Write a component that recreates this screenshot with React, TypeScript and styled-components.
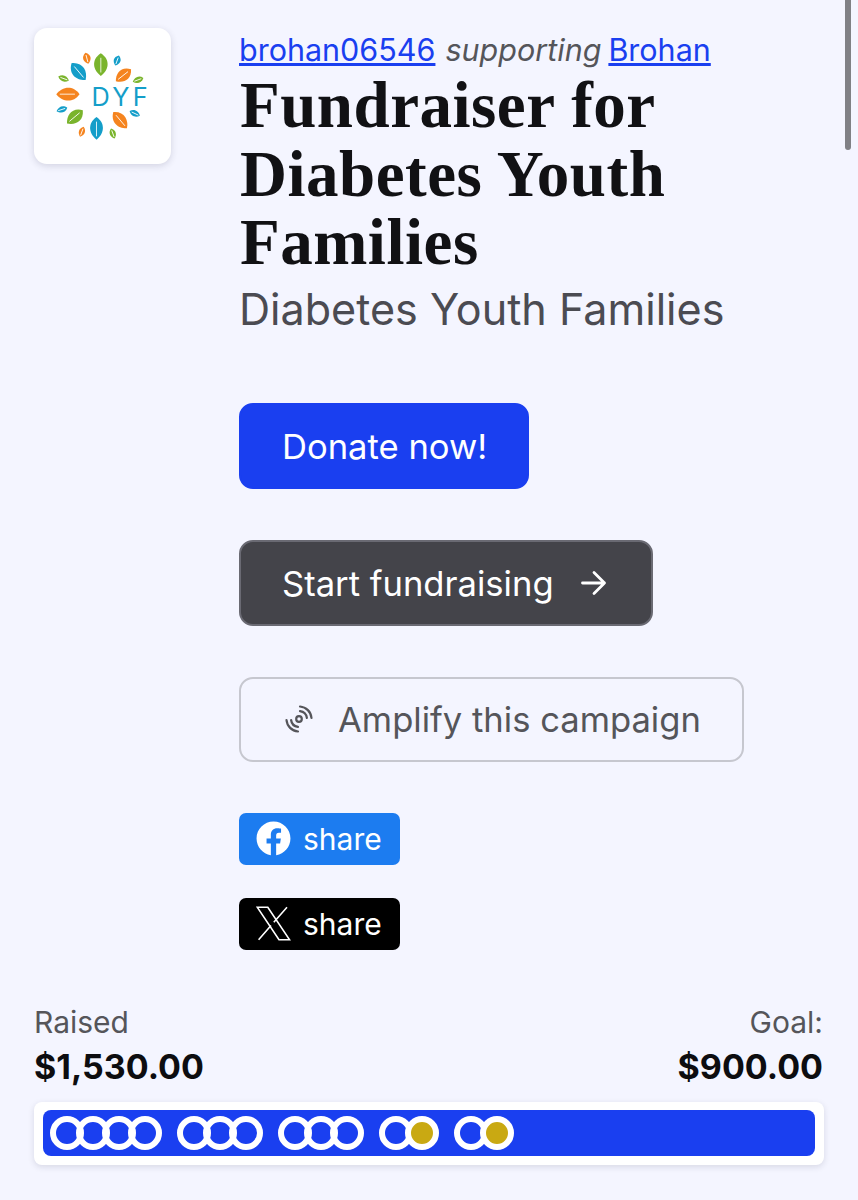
import React from "react";
import styled, {createGlobalStyle} from "styled-components";
import {FaFacebook} from "react-icons/fa";

const GlobalStyle = createGlobalStyle`
  html, body {
    margin: 0;
    padding: 0;
    background: #f4f5ff;
    overflow: hidden;
  }
  body {
    font-family: Inter, "Liberation Sans", sans-serif;
  }
`

const Page = styled.div`
  position: relative;
  width: 858px;
  height: 1200px;
  box-sizing: border-box;
  padding: 28px 34px 0 34px;
  overflow: hidden;
`

const ScrollThumb = styled.div`
  position: absolute;
  top: 0;
  right: 7px;
  width: 6px;
  height: 150px;
  border-radius: 0 0 3px 3px;
  background: #808085;
`

const Top = styled.div`
  display: flex;
  flex-direction: row;
`

const LogoCard = styled.div`
  flex: none;
  width: 137px;
  height: 136px;
  border-radius: 13px;
  background: #ffffff;
  box-shadow: 0 2px 7px rgba(40, 40, 70, 0.16);
`

const Main = styled.div`
  margin-left: 68px;
  display: flex;
  flex-direction: column;
  align-items: flex-start;
`

const Byline = styled.div`
  font-size: 30.5px;
  line-height: 44px;
  color: #55555a;
`

const Supporting = styled.span`
  font-style: italic;
  margin: 0 7px 0 10px;
`

const Link = styled.a`
  color: #1a3ff0;
  text-decoration: underline;
`

const Title = styled.h1`
  margin: -1px 0 0 1px;
  font-family: "Liberation Serif", serif;
  font-weight: 700;
  font-size: 65px;
  line-height: 68.5px;
  letter-spacing: 0.5px;
  color: #111114;
`

const Subtitle = styled.div`
  font-size: 43.1px;
  line-height: 64px;
  color: #4b4b52;
  margin: 0 0 62px 0;
`

const Button = styled.div<{$tone: "primary" | "dark" | "outline"}>`
  display: flex;
  align-items: center;
  box-sizing: border-box;
  height: 86px;
  border-radius: 14px;
  font-size: 34.6px;
  margin-bottom: 51px;
  border: 2px solid ${({$tone}) => $tone === "primary" ? "#1a3ff0" : $tone === "dark" ? "#6a6a73" : "#c6c7cf"};
  background: ${({$tone}) => $tone === "primary" ? "#1a3ff0" : $tone === "dark" ? "#44444a" : "transparent"};
  color: ${({$tone}) => $tone === "outline" ? "#55555a" : "#ffffff"};
  padding: 0 40px 0 41px;
`

const OutlineButton = styled(Button)`
  height: 85px;
  padding: 0 41px 0 44px;
  gap: 25px;
`

const ArrowIcon = styled.svg`
  margin: 0 4px 0 25px;
  width: 28px;
  height: 28px;
`

const ShareButton = styled.div<{$bg: string}>`
  display: flex;
  align-items: center;
  gap: 12px;
  box-sizing: border-box;
  width: 161px;
  height: 52px;
  padding-left: 17px;
  border-radius: 7px;
  background: ${({$bg}) => $bg};
  color: #ffffff;
  font-size: 30px;
  margin-bottom: 33px;
`

const Totals = styled.div`
  display: flex;
  justify-content: space-between;
  margin: 17px 1px 0 0;
`

const TotalCol = styled.div<{$right?: boolean}>`
  text-align: ${({$right}) => $right ? "right" : "left"};
`

const TotalLabel = styled.div`
  font-size: 30px;
  line-height: 45px;
  color: #55555a;
`

const TotalValue = styled.div`
  font-size: 34px;
  font-weight: 700;
  line-height: 43px;
  color: #0d0d10;
`

const BarCard = styled.div`
  margin-top: 14px;
  width: 790px;
  height: 63px;
  box-sizing: border-box;
  padding: 8px 9px 9px 9px;
  border-radius: 8px;
  background: #ffffff;
  box-shadow: 0 2px 6px rgba(40, 40, 70, 0.14);
`

const Bar = styled.div`
  display: flex;
  align-items: center;
  gap: 15px;
  height: 46px;
  padding-left: 7px;
  border-radius: 8px;
  background: #1a3ff0;
`

const Group = styled.div`
  display: flex;
`

const Ring = styled.div<{$gold?: boolean}>`
  width: 34px;
  height: 34px;
  box-sizing: border-box;
  flex: none;
  border-radius: 50%;
  border: 6.8px solid #ffffff;
  background: ${({$gold}) => $gold ? "#c9a912" : "transparent"};
  margin-left: -8px;

  &:first-child {
    margin-left: 0;
  }
`

const leaves: [number, number, number, number, number, string][] = [
    [242, 148, 68, 36, 0, "#7ab42c"],
    [200, 129, 34, 20, -15, "#f5841f"],
    [291, 136, 32, 18, 20, "#149ec9"],
    [175, 169, 66, 34, -40, "#149ec9"],
    [310, 180, 58, 30, 52, "#f5841f"],
    [130, 190, 34, 16, -70, "#7ab42c"],
    [354, 194, 34, 16, 70, "#7ab42c"],
    [143, 237, 70, 34, 90, "#f5841f"],
    [125, 283, 34, 16, 72, "#149ec9"],
    [164, 305, 62, 32, 50, "#7ab42c"],
    [229, 340, 68, 34, 0, "#149ec9"],
    [185, 350, 32, 16, 20, "#f5841f"],
    [278, 355, 32, 16, -20, "#7ab42c"],
    [300, 315, 64, 32, -40, "#f5841f"],
    [344, 295, 34, 16, -65, "#149ec9"],
];

function DyfLogo() {
    return (
        <svg width="137" height="136" viewBox="42 38 410 409">
            {leaves.map(([x, y, l, w, r, c], i) => (
                <g key={i} transform={`translate(${x} ${y}) rotate(${r})`}>
                    <path
                        d={`M0 ${-l / 2} C${w * 0.85} ${-l / 5} ${w * 0.65} ${l / 4} 0 ${l / 2} C${-w * 0.65} ${l / 4} ${-w * 0.85} ${-l / 5} 0 ${-l / 2}Z`}
                        fill={c}
                    />
                    <line x1="0" y1={-l * 0.3} x2="0" y2={l * 0.35} stroke="#fff" strokeWidth="2.5"/>
                </g>
            ))}
            <text x="214" y="272" fontFamily="Inter, sans-serif" fontSize="76" fill="#149ec9" letterSpacing="10">DYF</text>
        </svg>
    );
}

function AmplifyIcon() {
    return (
        <svg width="28" height="28" viewBox="0 0 28 28" fill="none" stroke="#55555a" strokeLinecap="round" strokeWidth="2.2">
            <circle cx="14" cy="14" r="2.8"/>
            <path d="M15 6.1A8 8 0 0 1 21.9 13"/>
            <path d="M15 1.5A12.5 12.5 0 0 1 26.5 13"/>
            <path d="M6.1 15A8 8 0 0 0 13 21.9"/>
            <path d="M1.5 15A12.5 12.5 0 0 0 13 26.5"/>
        </svg>
    );
}

function XLogo() {
    return (
        <svg width="35" height="35" viewBox="0 0 35 35" fill="none" stroke="#fff" strokeWidth="1.6">
            <path d="M1.2 1.2h10.6l21.8 32.6H23z"/>
            <path d="M31 1.2 17.8 16.2M15 19.5 2.6 33.8"/>
        </svg>
    );
}

const groups: boolean[][] = [
    [false, false, false, false],
    [false, false, false],
    [false, false, false],
    [false, true],
    [false, true],
];

export default function App() {
    return (
        <Page>
            <GlobalStyle/>
            <ScrollThumb/>
            <Top>
                <LogoCard><DyfLogo/></LogoCard>
                <Main>
                    <Byline>
                        <Link>brohan06546</Link>
                        <Supporting>supporting</Supporting>
                        <Link>Brohan</Link>
                    </Byline>
                    <Title>Fundraiser for<br/>Diabetes Youth<br/>Families</Title>
                    <Subtitle>Diabetes Youth Families</Subtitle>
                    <Button $tone="primary">Donate now!</Button>
                    <Button $tone="dark">
                        Start fundraising
                        <ArrowIcon viewBox="0 0 28 28" fill="none" stroke="#fff" strokeWidth="2.8" strokeLinecap="round" strokeLinejoin="round">
                            <path d="M3.5 14h22M15 3.5 25.5 14 15 24.5"/>
                        </ArrowIcon>
                    </Button>
                    <OutlineButton $tone="outline">
                        <AmplifyIcon/>
                        Amplify this campaign
                    </OutlineButton>
                    <ShareButton $bg="#1c7cf0"><FaFacebook size={35} color="#fff"/>share</ShareButton>
                    <ShareButton $bg="#000000"><XLogo/>share</ShareButton>
                </Main>
            </Top>
            <Totals>
                <TotalCol>
                    <TotalLabel>Raised</TotalLabel>
                    <TotalValue>$1,530.00</TotalValue>
                </TotalCol>
                <TotalCol $right>
                    <TotalLabel>Goal:</TotalLabel>
                    <TotalValue>$900.00</TotalValue>
                </TotalCol>
            </Totals>
            <BarCard>
                <Bar>
                    {groups.map((group, i) => (
                        <Group key={i}>
                            {group.map((gold, j) => <Ring key={j} $gold={gold}/>)}
                        </Group>
                    ))}
                </Bar>
            </BarCard>
        </Page>
    );
}
